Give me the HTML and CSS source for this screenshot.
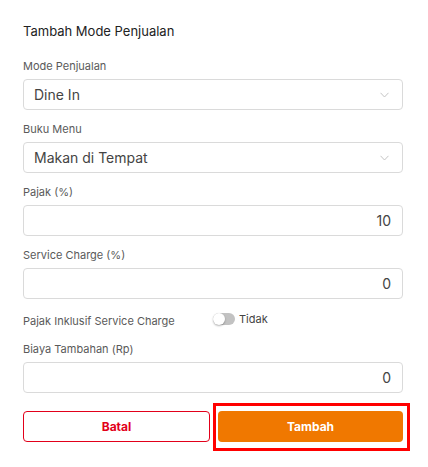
FILE: index.html
```html
<!DOCTYPE html>
<html lang="en">
<head>
  <meta charset="UTF-8">
  <meta name="viewport" content="width=device-width, initial-scale=1.0">
  <title>Tambah Mode Penjualan</title>
  <link rel="stylesheet" href="styles.css">
</head>
<body>
  <div class="modal">
    <h3 class="modal-title">Tambah Mode Penjualan</h3>

    <form class="form">
      <div class="field">
        <label>Mode Penjualan</label>
        <div class="select-box">
          <span>Dine In</span>
          <svg class="chevron" width="9" height="6" viewBox="0 0 9 6"><path d="M0.5 0.8 L4.5 5 L8.5 0.8" fill="none" stroke="#c4c4c4" stroke-width="1"/></svg>
        </div>
      </div>

      <div class="field">
        <label>Buku Menu</label>
        <div class="select-box">
          <span>Makan di Tempat</span>
          <svg class="chevron" width="9" height="6" viewBox="0 0 9 6"><path d="M0.5 0.8 L4.5 5 L8.5 0.8" fill="none" stroke="#c4c4c4" stroke-width="1"/></svg>
        </div>
      </div>

      <div class="field">
        <label>Pajak (%)</label>
        <div class="input-box">10</div>
      </div>

      <div class="field">
        <label>Service Charge (%)</label>
        <div class="input-box">0</div>
      </div>

      <div class="switch-row">
        <span class="switch-label">Pajak Inklusif Service Charge</span>
        <span class="switch"><span class="knob"></span></span>
        <span class="switch-text">Tidak</span>
      </div>

      <div class="field field-after-switch">
        <label>Biaya Tambahan (Rp)</label>
        <div class="input-box">0</div>
      </div>

      <div class="actions">
        <button type="button" class="btn btn-cancel">Batal</button>
        <button type="button" class="btn btn-submit">Tambah</button>
      </div>
    </form>
  </div>
</body>
</html>
```

FILE: styles.css
```css
* {
  margin: 0;
  padding: 0;
  box-sizing: border-box;
  font-family: 'Inter', 'Roboto', sans-serif;
}

body {
  background: #fff;
  width: 428px;
  height: 467px;
  overflow: hidden;
}

/* Modal */
.modal {
  padding: 22px 25px 0 23px;
}

.modal-title {
  font-size: 13px;
  font-weight: 400;
  line-height: 18px;
  color: #222;
  margin-bottom: 19px;
}

.field {
  margin-bottom: 12px;
}

.field label {
  display: block;
  font-size: 11px;
  line-height: 14px;
  color: #5a5a5a;
  margin-bottom: 6px;
}

.select-box, .input-box {
  height: 31px;
  border: 1px solid #dadada;
  border-radius: 4px;
  font-size: 14px;
  color: #444;
  display: flex;
  align-items: center;
}

.select-box {
  justify-content: space-between;
  padding: 0 13px 0 10px;
}

.input-box {
  justify-content: flex-end;
  padding: 0 11px;
}

.chevron {
  margin-top: 1px;
}

/* Toggle row */
.switch-row {
  display: flex;
  align-items: center;
  height: 16px;
}

.switch-label {
  font-size: 11px;
  color: #5a5a5a;
  width: 190px;
  margin-top: 4px;
}

.switch {
  width: 22px;
  height: 12px;
  border-radius: 6px;
  background: #c2c2c2;
  position: relative;
  margin-right: 4px;
}

.switch .knob {
  position: absolute;
  left: 0;
  top: 0;
  width: 12px;
  height: 12px;
  border-radius: 50%;
  background: #fff;
  box-shadow: 0 1px 2px rgba(0, 0, 0, 0.3);
}

.switch-text {
  font-size: 11px;
  color: #444;
}

.field-after-switch {
  margin-top: 15px;
  margin-bottom: 18px;
}

/* Buttons */
.actions {
  display: flex;
  gap: 8px;
}

.btn {
  flex: 1;
  height: 31px;
  border-radius: 4px;
  font-size: 12px;
  font-weight: 700;
  cursor: pointer;
}

.btn-cancel {
  background: #fff;
  border: 1px solid #e2001a;
  color: #e2001a;
}

.btn-submit {
  position: relative;
  background: #f07800;
  border: none;
  color: #fff;
}

/* highlight box drawn over the submit button */
.btn-submit::after {
  content: '';
  position: absolute;
  top: -8px;
  bottom: -9px;
  left: -5px;
  right: -7px;
  border: 3px solid #ff0000;
}
```
